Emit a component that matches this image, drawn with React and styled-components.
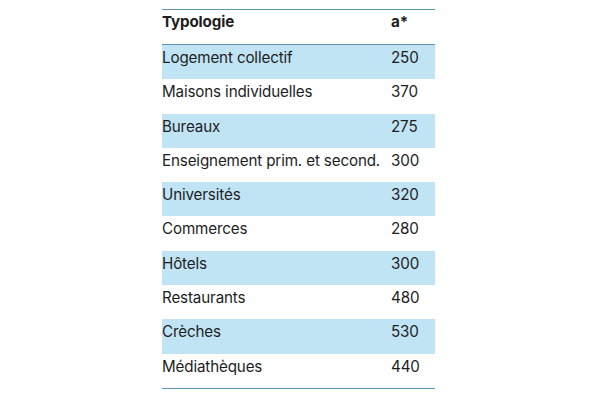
import React from "react";
import styled, { createGlobalStyle } from "styled-components";

const Global = createGlobalStyle`
  html, body { margin: 0; padding: 0; background: #ffffff; }
  body { width: 600px; height: 400px; overflow: hidden; }
`;

const Page = styled.div`
  display: flex;
  padding: 9px 0 0 162px;
  font-family: Inter, "Noto Sans", sans-serif;
  color: #1e1e1e;
`;

const Table = styled.div`
  width: 273px;
  display: flex;
  flex-direction: column;
  border-top: 1.5px solid #5b97b3;
  border-bottom: 1.5px solid #5b97b3;
`;

const Row = styled.div`
  display: grid;
  grid-template-columns: 229px 1fr;
  height: ${(p) => (p.$head ? "35px" : "34.3px")};
  background: ${(p) => (p.$shade ? "#c1e4f5" : "transparent")};
  border-bottom: ${(p) => (p.$head ? "1px solid #5b97b3" : "none")};
  box-sizing: border-box;
`;

const Cell = styled.div`
  font-size: 15.2px;
  font-weight: ${(p) => (p.$bold ? 700 : 400)};
  line-height: 20px;
  padding-top: ${(p) => (p.$head ? "2px" : "3px")};
  white-space: nowrap;
  letter-spacing: -0.15px;
`;

const rows = [
  ["Logement collectif", "250"],
  ["Maisons individuelles", "370"],
  ["Bureaux", "275"],
  ["Enseignement prim. et second.", "300"],
  ["Universités", "320"],
  ["Commerces", "280"],
  ["Hôtels", "300"],
  ["Restaurants", "480"],
  ["Crèches", "530"],
  ["Médiathèques", "440"],
];

export default function App() {
  return (
    <>
      <Global />
      <Page>
        <Table>
          <Row $head>
            <Cell $bold $head>Typologie</Cell>
            <Cell $bold $head>a*</Cell>
          </Row>
          {rows.map(([t, v], i) => (
            <Row key={t} $shade={i % 2 === 0}>
              <Cell>{t}</Cell>
              <Cell>{v}</Cell>
            </Row>
          ))}
        </Table>
      </Page>
    </>
  );
}
